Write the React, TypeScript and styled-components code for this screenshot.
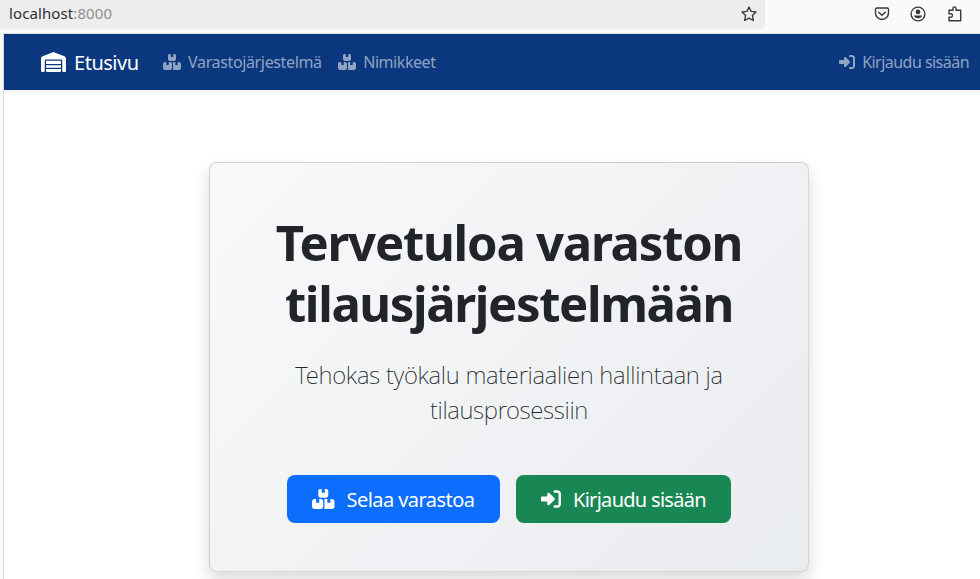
import React from "react";
import styled, { createGlobalStyle } from "styled-components";
import { FaWarehouse, FaBoxesStacked, FaRightToBracket } from "react-icons/fa6";

const GlobalStyle = createGlobalStyle`
  *, *::before, *::after { box-sizing: border-box; }
  body {
    margin: 0;
    overflow: hidden;
    background: #fafafa;
    color: #212529;
    font-family: "Noto Sans", "Open Sans", sans-serif;
    font-weight: 400;
  }
`;

const Screen = styled.div`
  width: 980px;
  height: 579px;
  display: flex;
  flex-direction: column;
  overflow: hidden;
`;

const BrowserBar = styled.header`
  flex: none;
  height: 33px;
  display: flex;
  justify-content: space-between;
  align-items: flex-start;
  background: #fafafa;
`;

const AddressField = styled.div`
  width: 765px;
  height: 29px;
  padding: 0 8px 2px 9px;
  display: flex;
  align-items: center;
  justify-content: space-between;
  background: #ededed;
  border-bottom-right-radius: 4px;
  color: #2e2e33;
  font-size: 15px;
  line-height: 20px;
`;

const Address = styled.span`
  padding-bottom: 2px;
  letter-spacing: 0.1px;
`;

const Port = styled.span`
  color: #8f8f92;
`;

const BrowserActions = styled.div`
  height: 27px;
  padding-right: 17.5px;
  display: flex;
  align-items: center;
  gap: 20.3px;
`;

const ToolIcon = styled.svg`
  display: block;
  width: 16px;
  height: 16px;
  fill: none;
  stroke: #38383d;
  stroke-width: 1.4;
  stroke-linejoin: round;
  stroke-linecap: round;
`;

const Viewport = styled.div`
  flex: 1;
  margin-left: 3px;
  border-left: 1px solid #dfdfdf;
  border-top: 1px solid #dfdfdf;
  background: #fff;
  display: flex;
  flex-direction: column;
  align-items: stretch;
  min-height: 0;
`;

const Navbar = styled.nav`
  flex: none;
  height: 56px;
  padding: 0 11px 0 37px;
  display: flex;
  align-items: center;
  background: #0a377d;
  box-shadow: 0 2px 4px rgba(0, 0, 0, 0.075);
`;

const WarehouseIcon = styled(FaWarehouse)`
  flex: none;
  width: 1.25em;
  height: 1em;
  margin-bottom: 2px;
`;

const BoxesIcon = styled(FaBoxesStacked)`
  flex: none;
  width: 1.125em;
  height: 1em;
  margin-bottom: 1px;
`;

const SignInIcon = styled(FaRightToBracket)`
  flex: none;
  width: 1em;
  height: 1em;
  margin-bottom: 1px;
`;

const Brand = styled.a`
  display: flex;
  align-items: center;
  gap: 8px;
  margin-right: 24px;
  padding-top: 1px;
  color: #fff;
  font-size: 20px;
  line-height: 30px;
`;

const NavLinks = styled.div`
  flex: 1;
  display: flex;
  gap: 16px;
`;

const NavLink = styled.a`
  display: flex;
  align-items: center;
  gap: 7.5px;
  color: rgba(255, 255, 255, 0.55);
  font-size: 16px;
  line-height: 24px;
`;

const Label = styled.span<{ $spacing: number }>`
  letter-spacing: ${(p) => p.$spacing}px;
  white-space: nowrap;
`;

const Main = styled.main`
  display: flex;
  justify-content: center;
  padding: 72px 0 0 34px;
`;

const Hero = styled.section`
  width: 600px;
  height: 410px;
  padding: 49px 48px 48px;
  border: 1px solid rgba(0, 0, 0, 0.13);
  border-radius: 8px;
  background: linear-gradient(135deg, #f8f9fa 0%, #e9ecef 100%);
  box-shadow: 0 8px 16px rgba(0, 0, 0, 0.15);
  text-align: center;
`;

const Title = styled.h1`
  margin: 0 0 23px;
  display: flex;
  flex-direction: column;
  align-items: center;
  font-size: 49px;
  font-weight: 700;
  line-height: 61px;
`;

const Lead = styled.p`
  margin: 0 0 48px;
  display: flex;
  flex-direction: column;
  align-items: center;
  font-size: 24px;
  font-weight: 200;
  line-height: 35px;
`;

const Actions = styled.div`
  display: flex;
  justify-content: center;
  gap: 16px;
`;

const Button = styled.button<{ $color: string; $width: number }>`
  width: ${(p) => p.$width}px;
  height: 48px;
  padding: 1px 0 0 25px;
  display: flex;
  align-items: center;
  gap: 12px;
  border: 0;
  border-radius: 8px;
  background: ${(p) => p.$color};
  color: #fff;
  font: inherit;
  font-size: 20px;
  line-height: 30px;
`;

export default function App() {
  return (
    <>
      <GlobalStyle />
      <Screen>
        <BrowserBar>
          <AddressField>
            <Address>localhost<Port>:8000</Port></Address>
            <ToolIcon viewBox="0 0 16 16">
              <path d="M8 1.1 10.1 5.4 15 6 11.4 9.4 12.3 14.5 8 12.1 3.7 14.5 4.6 9.4 1 6 5.9 5.4Z" />
            </ToolIcon>
          </AddressField>
          <BrowserActions>
            <ToolIcon viewBox="0 0 16 16">
              <path d="M3 2h10a1.5 1.5 0 0 1 1.5 1.5V7a6.5 6.5 0 0 1-13 0V3.500A1.500 1.500 0 0 1 3 2ZM4.700 6.300 8 9.300l3.300-3" />
            </ToolIcon>
            <ToolIcon viewBox="0 0 16 16">
              <circle cx="8" cy="8" r="6.900" />
              <circle cx="8" cy="5.900" r="2.400" fill="#38383d" stroke="none" />
              <path d="M4 9.500h8c0 1.500-1.600 2.700-4 2.700S4 11 4 9.500Z" fill="#38383d" stroke="none" />
            </ToolIcon>
            <ToolIcon viewBox="0 0 16 16">
              <path d="M2 14.700V11.200h1.800a1.700 1.700 0 0 0 0-3.400H2V4.300h4V2.400a1.500 1.500 0 0 1 3 0v1.900h4.700v10.400Z" />
            </ToolIcon>
          </BrowserActions>
        </BrowserBar>
        <Viewport>
          <Navbar>
            <Brand>
              <WarehouseIcon />
              <Label $spacing={-0.48}>Etusivu</Label>
            </Brand>
            <NavLinks>
              <NavLink>
                <BoxesIcon />
                <Label $spacing={-0.36}>Varastojärjestelmä</Label>
              </NavLink>
              <NavLink>
                <BoxesIcon />
                <Label $spacing={-0.44}>Nimikkeet</Label>
              </NavLink>
            </NavLinks>
            <NavLink>
              <SignInIcon />
              <Label $spacing={-0.53}>Kirjaudu sisään</Label>
            </NavLink>
          </Navbar>
          <Main>
            <Hero>
              <Title>
                <Label $spacing={-1.22}>Tervetuloa varaston</Label>
                <Label $spacing={-1.37}>tilausjärjestelmään</Label>
              </Title>
              <Lead>
                <Label $spacing={-0.27}>Tehokas työkalu materiaalien hallintaan ja</Label>
                <Label $spacing={-0.34}>tilausprosessiin</Label>
              </Lead>
              <Actions>
                <Button $color="#0d6efd" $width={213}>
                  <BoxesIcon />
                  <Label $spacing={-0.55}>Selaa varastoa</Label>
                </Button>
                <Button $color="#198754" $width={215}>
                  <SignInIcon />
                  <Label $spacing={-0.71}>Kirjaudu sisään</Label>
                </Button>
              </Actions>
            </Hero>
          </Main>
        </Viewport>
      </Screen>
    </>
  );
}
